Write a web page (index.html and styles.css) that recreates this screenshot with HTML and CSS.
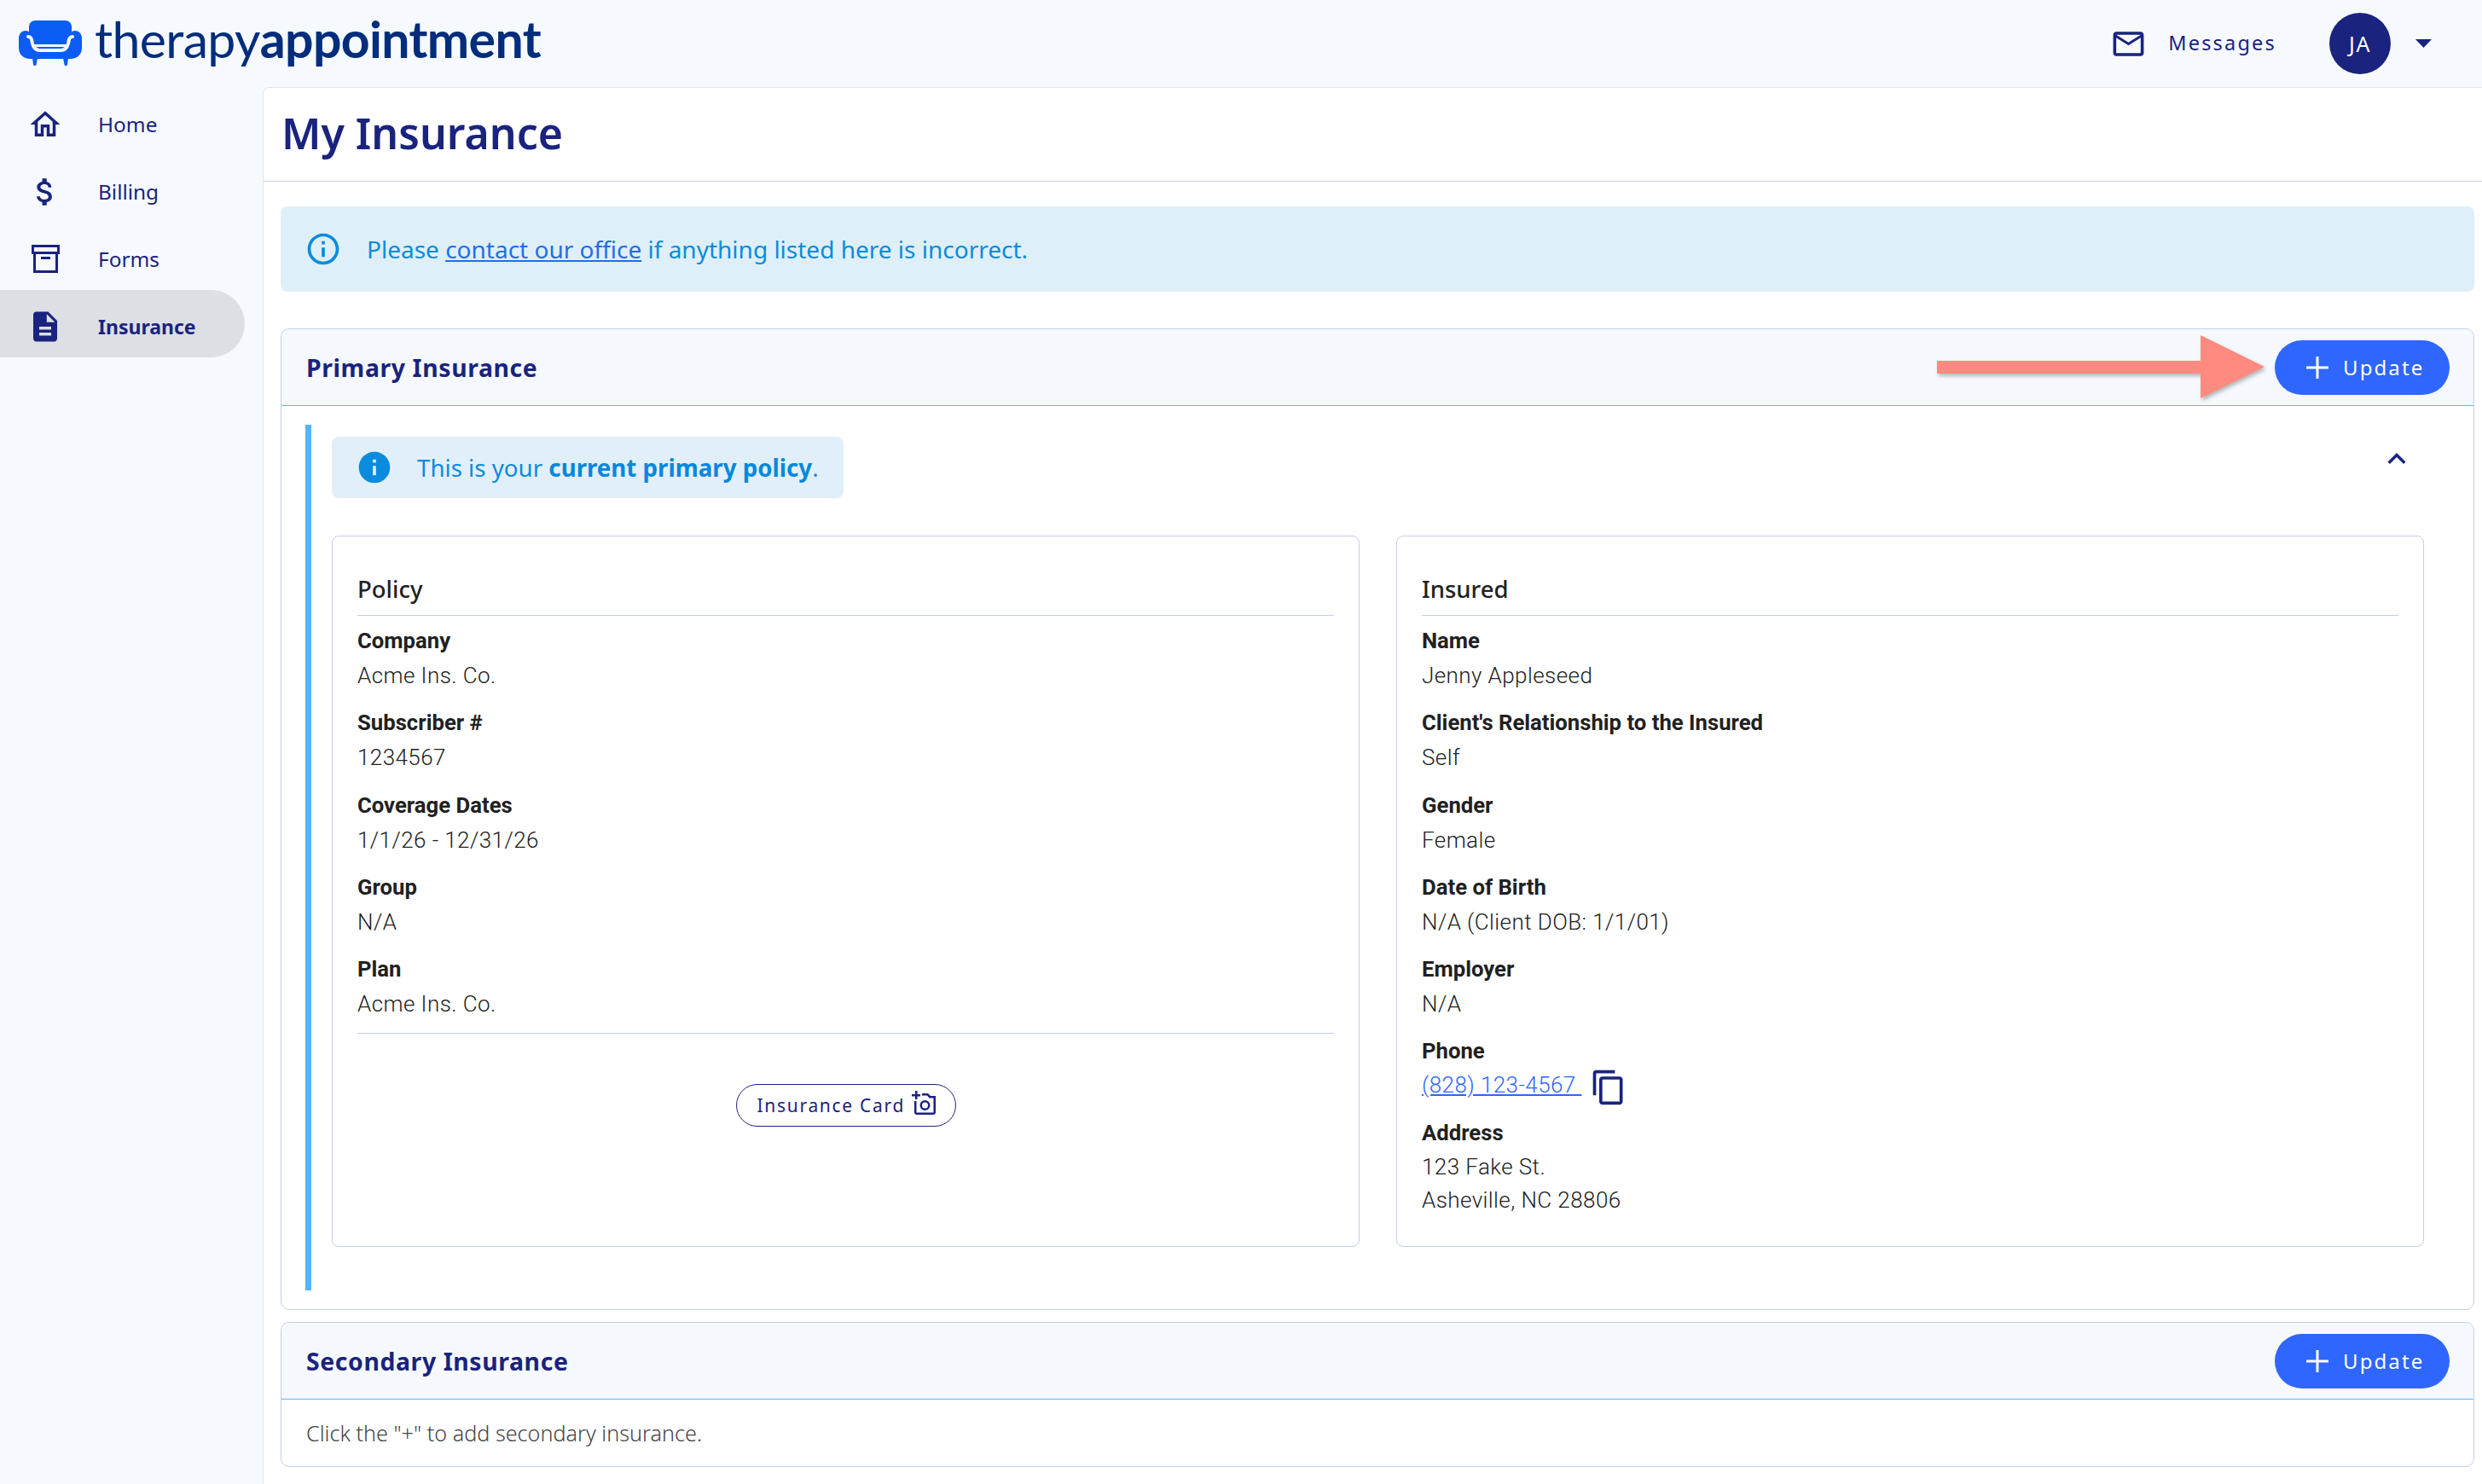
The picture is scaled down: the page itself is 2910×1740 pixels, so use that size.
FILE: index.html
```html
<!DOCTYPE html>
<html lang="en">
<head>
<meta charset="utf-8">
<title>My Insurance</title>
<link rel="stylesheet" href="styles.css">
</head>
<body>
<header class="topbar">
  <div class="logo">
    <svg class="sofa" viewBox="0 0 74 53">
      <path fill="#0a5cf5" d="M12 28V8c0-5 3-8 8-8h34c5 0 8 3 8 8v20z"/>
      <path fill="#0a5cf5" d="M8 12c5 0 8 4 8 9v10h42V21c0-5 3-9 8-9s8 4 8 9v11c0 8-6 13-13 13H13C6 45 0 40 0 32V21c0-5 3-9 8-9z"/>
      <path fill="#0a5cf5" d="M16 44h6l-1.500 8c-.5 1.300-3 1.300-3.500 0zM52 44h6l-1 8c-.5 1.300-3 1.300-3.500 0z"/>
      <path fill="none" stroke="#f6faff" stroke-width="4" stroke-linecap="round" d="M11 19c4 0 4 3 5 8 1 4 3 8 9 8h24c6 0 8-4 9-8 1-5 1-8 5-8"/>
    </svg>
    <span class="logo-text"><span class="logo-light">therapy</span><span class="logo-bold">appointment</span></span>
  </div>
  <div class="messages">
    <svg class="icon-mail" viewBox="0 0 24 24"><path d="M20 4H4c-1.100 0-1.990.9-1.990 2L2 18c0 1.100.9 2 2 2h16c1.100 0 2-.9 2-2V6c0-1.100-.9-2-2-2zm0 14H4V8l8 5 8-5v10zm-8-7L4 6h16l-8 5z"/></svg>
    <span class="messages-label">Messages</span>
  </div>
  <div class="avatar">JA</div>
  <svg class="caret" viewBox="0 0 19 10"><path d="M0 0h19l-9.500 10z"/></svg>
</header>

<div class="shell">
  <nav class="sidebar">
    <a class="nav-item"><span class="nav-icon"><svg viewBox="0 0 24 24"><path d="M12 5.690l5 4.500V18h-2v-6H9v6H7v-7.810l5-4.500M12 3L2 12h3v8h6v-6h2v6h6v-8h3L12 3z"/></svg></span>Home</a>
    <a class="nav-item"><span class="nav-icon"><svg viewBox="0 0 24 24"><path d="M11.800 10.900c-2.270-.59-3-1.200-3-2.150 0-1.090 1.010-1.850 2.700-1.850 1.780 0 2.440.85 2.500 2.100h2.210c-.07-1.720-1.120-3.300-3.210-3.810V3h-3v2.160c-1.940.42-3.500 1.680-3.500 3.610 0 2.310 1.910 3.460 4.700 4.130 2.500.6 3 1.480 3 2.410 0 .69-.49 1.790-2.700 1.790-2.060 0-2.870-.92-2.980-2.100h-2.200c.12 2.190 1.760 3.420 3.680 3.830V21h3v-2.150c1.950-.37 3.500-1.500 3.500-3.550 0-2.840-2.430-3.810-4.700-4.400z"/></svg></span>Billing</a>
    <a class="nav-item"><span class="nav-icon"><svg viewBox="0 0 33 33"><path fill-rule="evenodd" d="M0 0h33v11h-2v22H2V11H0zm3 3v5h27V3zm2 8v19h23V11zm6 3h11v3H11z"/></svg></span>Forms</a>
    <a class="nav-item nav-active"><span class="nav-icon"><svg viewBox="0 0 24 24"><path d="M14 2H6c-1.100 0-2 .9-2 2v16c0 1.100.9 2 2 2h12c1.100 0 2-.9 2-2V8l-6-6zm2 16H8v-2h8v2zm0-4H8v-2h8v2zm-3-5V3.500L18.500 9H13z"/></svg></span>Insurance</a>
  </nav>

  <main class="content">
    <div class="title-row"><h1 class="page-title">My Insurance</h1></div>
    <div class="content-body">
      <div class="alert">
        <svg class="alert-icon" viewBox="0 0 24 24"><path d="M11 7h2v2h-2zm0 4h2v6h-2zm1-9C6.480 2 2 6.480 2 12s4.480 10 10 10 10-4.480 10-10S17.520 2 12 2zm0 18c-4.410 0-8-3.590-8-8s3.590-8 8-8 8 3.590 8 8-3.590 8-8 8z"/></svg>
        <span>Please <a class="alert-link">contact our office</a> if anything listed here is incorrect.</span>
      </div>

      <section class="panel panel-primary">
        <div class="panel-head">
          <h2 class="panel-title">Primary Insurance</h2>
          <div class="head-actions">
            <svg class="callout" viewBox="0 0 394 84"><path d="M2 32h309V2l75 37-75 37V47H2z"/></svg>
            <button class="btn-update"><svg class="plus" viewBox="0 0 26 26"><path d="M11.500 0h3v11.500H26v3H14.500V26h-3V14.500H0v-3h11.500z"/></svg>Update</button>
          </div>
        </div>
        <div class="policy">
          <div class="policy-top">
            <div class="notice">
              <svg class="notice-icon" viewBox="0 0 24 24"><path d="M12 2C6.480 2 2 6.480 2 12s4.480 10 10 10 10-4.480 10-10S17.520 2 12 2zm1 15h-2v-6h2v6zm0-8h-2V7h2v2z"/></svg>
              <span>This is your <b>current primary policy</b>.</span>
            </div>
            <svg class="chevron" viewBox="0 0 24 24"><path d="M12 8l-6 6 1.410 1.410L12 10.830l4.590 4.580L18 14z"/></svg>
          </div>
          <div class="columns">
            <article class="card">
              <h3 class="card-title">Policy</h3>
              <div class="fields">
                <div class="field"><div class="label">Company</div><div class="value">Acme Ins. Co.</div></div>
                <div class="field"><div class="label">Subscriber #</div><div class="value">1234567</div></div>
                <div class="field"><div class="label">Coverage Dates</div><div class="value">1/1/26 - 12/31/26</div></div>
                <div class="field"><div class="label">Group</div><div class="value">N/A</div></div>
                <div class="field"><div class="label">Plan</div><div class="value">Acme Ins. Co.</div></div>
              </div>
              <div class="card-foot">
                <button class="btn-card">Insurance Card
                  <svg class="photo" viewBox="0 0 28 28"><path d="M4 0h2.500v4H10v2.500H6.500V10H4V6.500H0V4h4z"/><path fill-rule="evenodd" d="M12 3h7l3 3h6v19a3 3 0 0 1-3 3H6a3 3 0 0 1-3-3V12h2.500v13.500h20V8.500h-5L18 5.500h-6zM15.500 11a6 6 0 1 1 0 12 6 6 0 0 1 0-12zm0 2.500a3.500 3.500 0 1 0 0 7 3.500 3.500 0 0 0 0-7z"/></svg>
                </button>
              </div>
            </article>
            <article class="card">
              <h3 class="card-title">Insured</h3>
              <div class="fields">
                <div class="field"><div class="label">Name</div><div class="value">Jenny Appleseed</div></div>
                <div class="field"><div class="label">Client's Relationship to the Insured</div><div class="value">Self</div></div>
                <div class="field"><div class="label">Gender</div><div class="value">Female</div></div>
                <div class="field"><div class="label">Date of Birth</div><div class="value">N/A (Client DOB: 1/1/01)</div></div>
                <div class="field"><div class="label">Employer</div><div class="value">N/A</div></div>
                <div class="field field-phone"><div class="label">Phone</div>
                  <div class="phone-row"><a class="phone-link">(828) 123-4567&nbsp;</a>
                    <svg class="copy" viewBox="0 0 24 24"><path d="M16 1H4c-1.100 0-2 .9-2 2v14h2V3h12V1zm3 4H8c-1.100 0-2 .9-2 2v14c0 1.100.9 2 2 2h11c1.100 0 2-.9 2-2V7c0-1.100-.9-2-2-2zm0 16H8V7h11v14z"/></svg>
                  </div>
                </div>
                <div class="field"><div class="label">Address</div><div class="value value-multi">123 Fake St.<br>Asheville, NC 28806</div></div>
              </div>
            </article>
          </div>
        </div>
      </section>

      <section class="panel panel-secondary">
        <div class="panel-head">
          <h2 class="panel-title">Secondary Insurance</h2>
          <button class="btn-update"><svg class="plus" viewBox="0 0 26 26"><path d="M11.500 0h3v11.500H26v3H14.500V26h-3V14.500H0v-3h11.500z"/></svg>Update</button>
        </div>
        <p class="panel-note">Click the "+" to add secondary insurance.</p>
      </section>
    </div>
  </main>
</div>
</body>
</html>
```

FILE: styles.css
```css
* { box-sizing: border-box; }
html, body { margin: 0; padding: 0; height: 100%; }
body {
  width: 2910px;
  height: 1740px;
  overflow: hidden;
  background: #f6faff;
  color: #1a237e;
  font-family: "Noto Sans", sans-serif;
  display: flex;
  flex-direction: column;
}
h1, h2, h3, p { margin: 0; }
svg { display: block; fill: currentColor; flex: none; }

/* top bar */
.topbar {
  height: 102px;
  flex: none;
  display: flex;
  align-items: center;
  padding: 0 60px 0 22px;
}
.logo { display: flex; align-items: center; margin-right: auto; }
.sofa { width: 74px; height: 53px; margin-top: -1px; }
.logo-text {
  margin-left: 15px;
  margin-top: -10px;
  font-family: "Lato", sans-serif;
  font-size: 59px;
  line-height: 70px;
  letter-spacing: -0.65px;
  color: #002d7c;
}
.logo-light { font-weight: 400; }
.logo-bold { font-weight: 700; }
.messages { display: flex; align-items: center; }
.icon-mail { width: 43px; height: 43px; margin-right: 25px; }
.messages-label { font-size: 23.5px; letter-spacing: 2.2px; margin-top: -3px; }
.avatar {
  width: 72px;
  height: 72px;
  margin-left: 62px;
  border-radius: 50%;
  background: #1a237e;
  color: #fff;
  font-size: 25px;
  letter-spacing: 1.6px;
  display: flex;
  align-items: center;
  justify-content: center;
}
.caret { width: 19px; height: 10px; margin-left: 29px; margin-right: -1px; }

/* shell */
.shell { flex: 1; display: flex; min-height: 0; }
.sidebar { width: 308px; flex: none; padding-top: 1px; }
.nav-item {
  height: 79px;
  width: 287px;
  display: flex;
  align-items: center;
  padding-top: 6px;
  font-size: 24.4px;
  color: #1a237e;
  border-radius: 0 40px 40px 0;
}
.nav-icon { width: 115px; padding-left: 32px; flex: none; display: flex; }
.nav-icon svg { width: 42px; height: 42px; }
.nav-item:nth-child(3) .nav-icon svg { width: 33px; height: 33px; margin-left: 5px; }
.nav-active { background: #dcdfe3; font-weight: 700; font-size: 23px; }

/* content */
.content {
  flex: 1;
  background: #fff;
  border-left: 1px solid #dfe4f0;
  border-top: 1px solid #dfe4f0;
  border-top-left-radius: 8px;
  min-width: 0;
}
.title-row { height: 110px; border-bottom: 1px solid #c5cdeb; padding: 0 0 3px 21px; display: flex; align-items: center; }
.page-title { font-size: 50px; font-weight: 600; line-height: 64px; color: #1a237e; }
.content-body { padding: 29px 9px 0 20px; }

.alert {
  height: 100px;
  background: #deeff9;
  border-radius: 8px;
  display: flex;
  align-items: center;
  padding-left: 28px;
  font-size: 28px;
  color: #0a8bdd;
}
.alert-icon { width: 44px; height: 44px; margin-right: 29px; }
.alert-link { color: #1f6fe8; text-decoration: underline; }

/* panels */
.panel { border: 1px solid #c5cdeb; border-radius: 10px; background: #fff; }
.panel-primary { margin-top: 43px; height: 1151px; }
.panel-secondary { margin-top: 14px; height: 170px; }
.panel-head {
  height: 90px;
  background: #f5f9fe;
  border-bottom: 1px solid #5ab8ff;
  border-radius: 10px 10px 0 0;
  display: flex;
  align-items: center;
  justify-content: space-between;
  padding: 0 28px 0 29px;
}
.panel-title { font-size: 28.4px; font-weight: 700; letter-spacing: 0.6px; color: #1a237e; }
.head-actions { display: flex; align-items: center; position: relative; }
.callout {
  position: absolute;
  right: 209px;
  top: -8px;
  width: 394px;
  height: 84px;
  fill: #ff8a80;
  filter: drop-shadow(2px 3px 2px rgba(60, 60, 60, 0.35));
}
.btn-update {
  width: 205px;
  height: 64px;
  border: 0;
  border-radius: 32px;
  background: #2e66ff;
  color: #fff;
  font-family: inherit;
  font-size: 24px;
  letter-spacing: 2.1px;
  display: flex;
  align-items: center;
  padding: 0 0 0 37px;
}
.plus { width: 26px; height: 26px; margin-right: 17px; }

.policy {
  margin: 22px 0 0 28px;
  height: 1015px;
  border-left: 7px solid #54b6ff;
  padding: 14px 0 0 24px;
  width: 2484px;
}
.policy-top { display: flex; justify-content: space-between; align-items: flex-start; height: 72px; }
.notice {
  height: 72px;
  width: 600px;
  background: #e1effa;
  border-radius: 8px;
  display: flex;
  align-items: center;
  padding-left: 28px;
  font-size: 27.7px;
  color: #0a8bdd;
}
.notice b { font-weight: 700; color: #0588dd; }
.notice-icon { width: 44px; height: 44px; margin-right: 28px; }
.chevron { width: 42px; height: 42px; margin: 5px 11px 0 0; }

.columns { margin-top: 44px; display: grid; grid-template-columns: 1205px 1205px; column-gap: 43px; }
.card { height: 834px; border: 1px solid #c5cdeb; border-radius: 8px; padding: 39px 29px 0; }
.card-title {
  font-size: 27.5px;
  font-weight: 500;
  line-height: 46px;
  color: #212121;
  padding-bottom: 7px;
  border-bottom: 1px solid #c5cdeb;
}
.fields { padding-top: 9px; }
.field { margin-bottom: 14.25px; }
.field:last-child { margin-bottom: 0; }
.label { font-family: "Roboto", sans-serif; font-weight: 700; font-size: 25.7px; line-height: 41px; color: #212121; }
.value { font-family: "Roboto", sans-serif; font-weight: 300; font-size: 26px; line-height: 41px; letter-spacing: 0.42px; color: #212121; }
.value-multi { line-height: 39px; }
.field-phone { margin-bottom: 17px; }
.phone-row { display: flex; align-items: flex-start; height: 38px; }
.phone-link { font-family: "Roboto", sans-serif; font-weight: 300; font-size: 26px; line-height: 38px; letter-spacing: 0.42px; color: #2e66ff; text-decoration: underline; }
.copy { width: 44px; height: 44px; margin-left: 10px; }

.card-foot { border-top: 1px solid #c5cdeb; margin-top: 13px; padding-top: 59px; display: flex; justify-content: center; }
.btn-card {
  width: 258px;
  height: 50px;
  background: #fff;
  border: 1px solid #1a237e;
  border-radius: 25px;
  color: #1a237e;
  font-family: inherit;
  font-size: 21px;
  letter-spacing: 1.7px;
  display: flex;
  align-items: center;
  padding: 0 0 0 24px;
}
.photo { width: 28px; height: 28px; margin-left: 8px; margin-top: -6px; }

.panel-note { padding-left: 29px; font-size: 25.2px; font-weight: 300; line-height: 78px; color: #444; }
```
